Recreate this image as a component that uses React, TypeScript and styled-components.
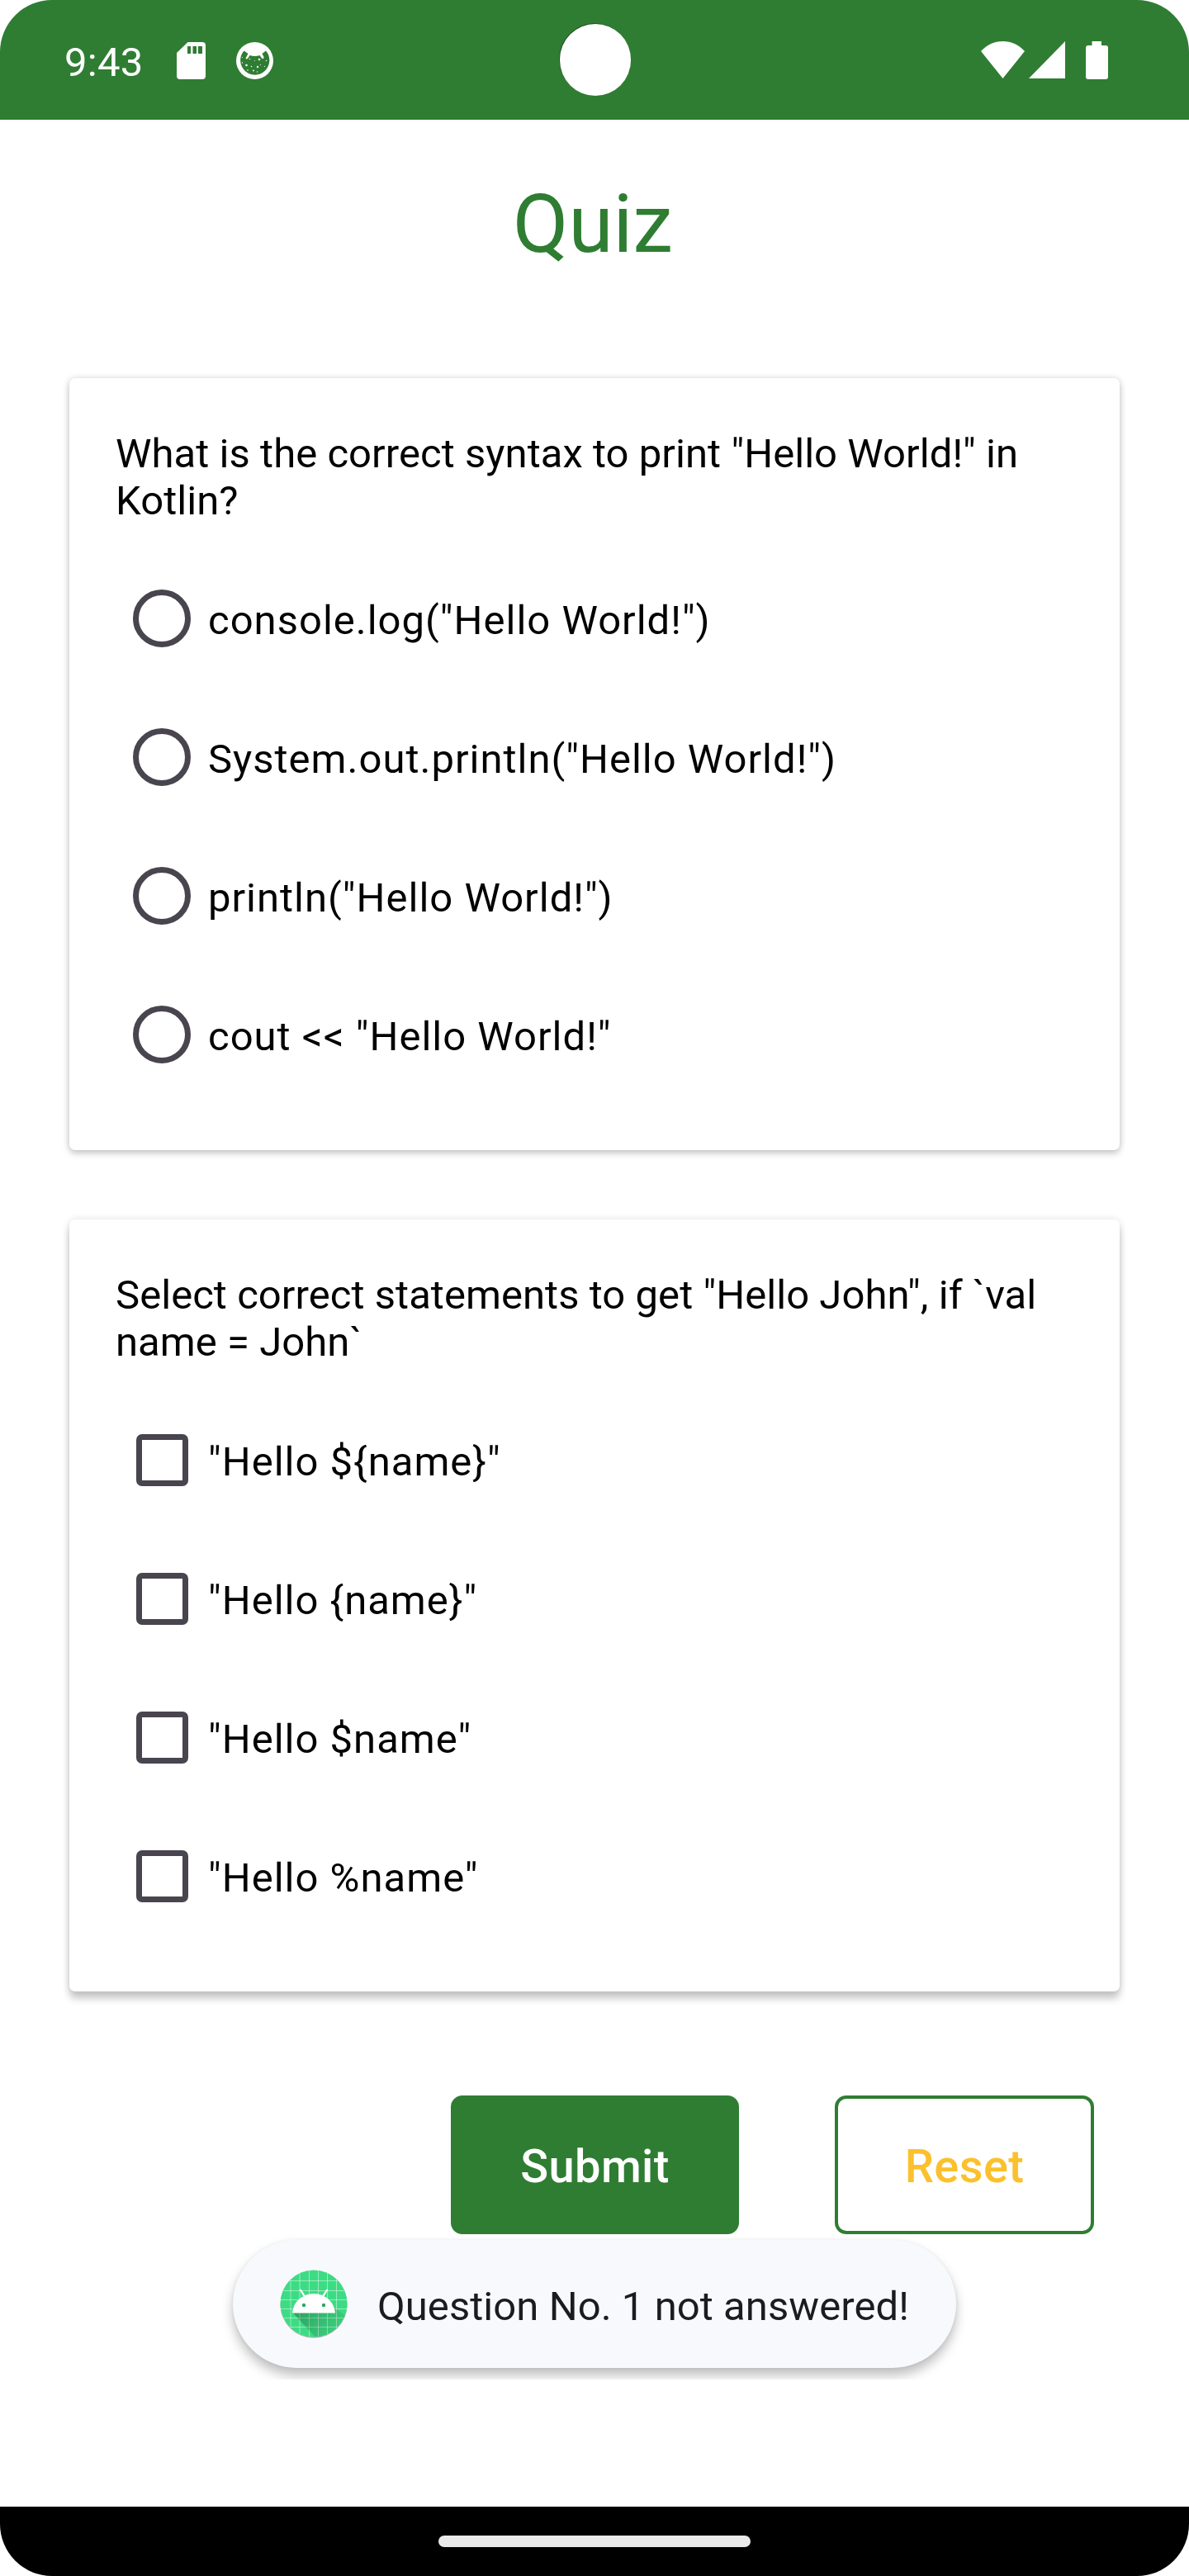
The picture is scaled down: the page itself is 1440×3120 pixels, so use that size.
import React from "react";
import styled, { createGlobalStyle } from "styled-components";

const GREEN = "#2f7d32";
const OUTLINE = "#49454f";

const GlobalStyle = createGlobalStyle`
  *, *::before, *::after { box-sizing: border-box; }
  body { margin: 0; background: #fff; font-family: Roboto, "Liberation Sans", sans-serif; }
  button { font-family: inherit; }
`;

const Screen = styled.div`
  display: flex;
  flex-direction: column;
  position: relative;
  width: 1440px;
  height: 3120px;
  overflow: hidden;
  border-radius: 63px;
  background: #fff;
  color: #000;
`;

const StatusBar = styled.header`
  display: flex;
  align-items: center;
  justify-content: space-between;
  flex: none;
  height: 145px;
  padding: 0 98px 0 78px;
  background: ${GREEN};
  color: #fff;
`;

const StatusGroup = styled.div`
  display: flex;
  align-items: center;
`;

const Clock = styled.span`
  width: 136px;
  font-size: 49px;
  line-height: 57px;
  letter-spacing: 0.3px;
  padding-top: 6px;
`;

const StatusIcon = styled.svg<{ $gap?: number; $drop?: number }>`
  display: block;
  flex: none;
  margin-top: ${(p) => p.$drop ?? 0}px;
  margin-left: ${(p) => p.$gap ?? 0}px;
`;

const Camera = styled.div`
  position: absolute;
  top: 29px;
  left: 677.5px;
  width: 86.5px;
  height: 86.5px;
  border-radius: 50%;
  background: #fff;
  box-shadow: -0.7px -0.7px 0 0 #1a451c;
`;

const Content = styled.main`
  display: flex;
  flex-direction: column;
  flex: 1;
  padding: 0 84px;
`;

const Title = styled.h1`
  margin: 69px 0 129px;
  height: 115px;
  padding-right: 4px;
  font-size: 98px;
  font-weight: 400;
  line-height: 115px;
  text-align: center;
  color: ${GREEN};
`;

const Card = styled.section<{ $raised?: boolean }>`
  height: 935px;
  margin-bottom: 84px;
  padding: 63px 56px 0;
  border-radius: 7px;
  background: #fff;
  box-shadow: ${(p) =>
    p.$raised
      ? "0 9px 10px rgba(0,0,0,.2), 0 0 10px rgba(0,0,0,.12)"
      : "0 4px 8px rgba(0,0,0,.19), 0 0 9px rgba(0,0,0,.12)"};
`;

const Question = styled.p`
  margin: 0;
  height: 115px;
  font-size: 49px;
  line-height: 57px;
  letter-spacing: 0.05px;
  white-space: pre;
`;

const Options = styled.div`
  display: flex;
  flex-direction: column;
  margin-top: 29px;
`;

const Option = styled.label`
  display: flex;
  align-items: center;
  height: 168px;
  padding-left: 21px;
  font-size: 49px;
  line-height: 57px;
  letter-spacing: 1px;
`;

const Control = styled.span`
  display: flex;
  align-items: center;
  justify-content: center;
  width: 70px;
  margin-right: 21px;
`;

const Radio = styled.span`
  width: 70px;
  height: 70px;
  border: 7px solid ${OUTLINE};
  border-radius: 50%;
`;

const Checkbox = styled.span`
  width: 63px;
  height: 63px;
  border: 7px solid ${OUTLINE};
  border-radius: 7px;
`;

const OptionText = styled.span`
  padding-top: 5px;
`;

const Actions = styled.div`
  display: flex;
  justify-content: flex-end;
  gap: 116px;
  margin-top: 42px;
  padding-right: 31px;
`;

const Button = styled.button<{ $outlined?: boolean }>`
  width: ${(p) => (p.$outlined ? 314 : 349)}px;
  height: 168px;
  padding: 4px 0 0;
  border: 4px solid ${GREEN};
  border-radius: 14px;
  background: ${(p) => (p.$outlined ? "#fff" : GREEN)};
  color: ${(p) => (p.$outlined ? "#fbc02d" : "#fff")};
  font-size: 56px;
  font-weight: 500;
  line-height: 66px;
  letter-spacing: 0.35px;
`;

const ToastLayer = styled.div`
  position: absolute;
  top: 2698px;
  left: 262px;
  display: flex;
  width: 916px;
  height: 184px;
  padding: 15px 20px 14px;
  overflow: hidden;
`;

const Toast = styled.div`
  display: flex;
  align-items: center;
  width: 876px;
  height: 155px;
  padding-left: 56px;
  border-radius: 78px;
  background: #f8f9fd;
  color: #191c20;
  font-size: 49px;
  line-height: 57px;
  box-shadow: 0 9px 14px rgba(0, 0, 0, 0.25), 0 0 5px rgba(0, 0, 0, 0.06);
`;

const ToastText = styled.span`
  margin-left: 35px;
  padding-top: 6px;
  letter-spacing: 0.06px;
  white-space: nowrap;
`;

const NavBar = styled.footer`
  display: flex;
  align-items: center;
  justify-content: center;
  flex: none;
  height: 84px;
  background: #000;
`;

const Handle = styled.div`
  width: 378px;
  height: 14px;
  border-radius: 7px;
  background: #eaeaea;
`;

const SdCardIcon = () => (
  <StatusIcon $drop={2} width="35" height="45" viewBox="0 0 35 45" fill="#fff">
    <path
      fillRule="evenodd"
      d="M13.5 0H31a4 4 0 0 1 4 4v37a4 4 0 0 1-4 4H4a4 4 0 0 1-4-4V13zM13 5v9h4V5zm6.500 0v9h4.500V5zm6.500 0v9h5V5z"
    />
  </StatusIcon>
);

const DOTS: [number, number, number][] = [
  [7.5, 18.5, 0.6], [16.5, 20.5, 0.8], [28, 21, 1.3], [36.5, 22.5, 0.7], [22.5, 22.5, 0.5],
  [7.5, 25, 0.7], [12.5, 28, 1.3], [18.5, 29.5, 0.8], [26, 30, 1.2], [29.5, 27.5, 0.6],
  [34.5, 29.5, 0.6], [14, 34, 0.8], [21, 34.5, 0.9], [25.5, 36, 0.7],
];

const DebugIcon = () => (
  <StatusIcon $gap={37} $drop={2} width="45" height="45" viewBox="0 0 45 45">
    <circle cx="22.5" cy="22.5" r="22.5" fill="#fff" />
    <path
      d="M9.5 10.5L14.5 14L11.500 19.500Q13 22 15 18.500L16.500 16Q22.500 18 28.500 16L31 19.500Q33.500 21.500 33.500 18L31.500 14L36 10.500A17.600 17.600 0 1 1 9.500 10.500Z"
      fill={GREEN}
    />
    {DOTS.map(([x, y, r]) => (
      <circle key={`${x}-${y}`} cx={x} cy={y} r={r} fill="#fff" />
    ))}
  </StatusIcon>
);

const WifiIcon = () => (
  <StatusIcon width="53" height="45" viewBox="0 0 53 45" fill="#fff">
    <path d="M26.500 45L0 12C7.500 4 16 0 26.500 0S45.500 4 53 12Z" />
  </StatusIcon>
);

const SignalIcon = () => (
  <StatusIcon $gap={5} width="44" height="45" viewBox="0 0 44 45" fill="#fff">
    <path d="M0 45L44 0V45Z" />
  </StatusIcon>
);

const BatteryIcon = () => (
  <StatusIcon $gap={25} width="27" height="46" viewBox="0 0 27 46" fill="#fff">
    <path d="M7.500 0H19V5H24a3 3 0 0 1 3 3V43a3 3 0 0 1-3 3H3a3 3 0 0 1-3-3V8a3 3 0 0 1 3-3H7.500Z" />
  </StatusIcon>
);

const GRID_X = [14, 25, 36.5, 47.5, 58.5, 69.5];
const GRID_Y = [13.5, 25.5, 36.5, 47.5, 58.5, 69.5];

const AppIcon = () => (
  <svg width="84" height="84" viewBox="0 0 84 84">
    <defs>
      <clipPath id="disc">
        <circle cx="42" cy="41" r="40.5" />
      </clipPath>
      <linearGradient id="cast" x1="30" y1="50" x2="68" y2="82" gradientUnits="userSpaceOnUse">
        <stop offset="0" stopColor="#000" stopOpacity=".24" />
        <stop offset="1" stopColor="#000" stopOpacity=".04" />
      </linearGradient>
    </defs>
    <circle cx="42" cy="42.3" r="40.5" fill="#8d9a94" opacity=".7" />
    <g clipPath="url(#disc)">
      <rect width="84" height="84" fill="#3ddc84" />
      <g stroke="#fff" strokeOpacity=".45" strokeWidth="1">
        {GRID_X.map((x) => (
          <path key={x} d={`M${x} 0V84`} />
        ))}
        {GRID_Y.map((y) => (
          <path key={y} d={`M0 ${y}H84`} />
        ))}
      </g>
      <path d="M16 51.500L46 84H84V58L65 45Z" fill="url(#cast)" />
    </g>
    <path
      d="M16 52.500C17 43 22 36 29.500 32.300L24.700 24.200Q25.700 22.800 26.700 24L31.500 31Q42 27 52.500 31L57.300 24Q58.500 22.800 59.300 24.200L54.500 32.300C62 36 67 43 68 52.500Z"
      fill="#fff"
    />
    <circle cx="30" cy="43" r="2.2" fill="#2aa866" />
    <circle cx="54" cy="43" r="2.2" fill="#2aa866" />
  </svg>
);

const RADIO_OPTIONS = [
  'console.log("Hello World!")',
  'System.out.println("Hello World!")',
  'println("Hello World!")',
  'cout << "Hello World!"',
];

const CHECK_OPTIONS = ['"Hello ${name}"', '"Hello {name}"', '"Hello $name"', '"Hello %name"'];

export default function App() {
  return (
    <>
      <GlobalStyle />
      <Screen>
        <StatusBar>
          <StatusGroup>
            <Clock>9:43</Clock>
            <SdCardIcon />
            <DebugIcon />
          </StatusGroup>
          <Camera />
          <StatusGroup>
            <WifiIcon />
            <SignalIcon />
            <BatteryIcon />
          </StatusGroup>
        </StatusBar>
        <Content>
          <Title>Quiz</Title>
          <Card>
            <Question>{'What is the correct syntax to print "Hello World!" in\nKotlin?'}</Question>
            <Options>
              {RADIO_OPTIONS.map((text) => (
                <Option key={text}>
                  <Control>
                    <Radio />
                  </Control>
                  <OptionText>{text}</OptionText>
                </Option>
              ))}
            </Options>
          </Card>
          <Card $raised>
            <Question>{'Select correct statements to get "Hello John", if `val\nname = John`'}</Question>
            <Options>
              {CHECK_OPTIONS.map((text) => (
                <Option key={text}>
                  <Control>
                    <Checkbox />
                  </Control>
                  <OptionText>{text}</OptionText>
                </Option>
              ))}
            </Options>
          </Card>
          <Actions>
            <Button>Submit</Button>
            <Button $outlined>Reset</Button>
          </Actions>
        </Content>
        <NavBar>
          <Handle />
        </NavBar>
        <ToastLayer>
          <Toast>
            <AppIcon />
            <ToastText>Question No. 1 not answered!</ToastText>
          </Toast>
        </ToastLayer>
      </Screen>
    </>
  );
}
